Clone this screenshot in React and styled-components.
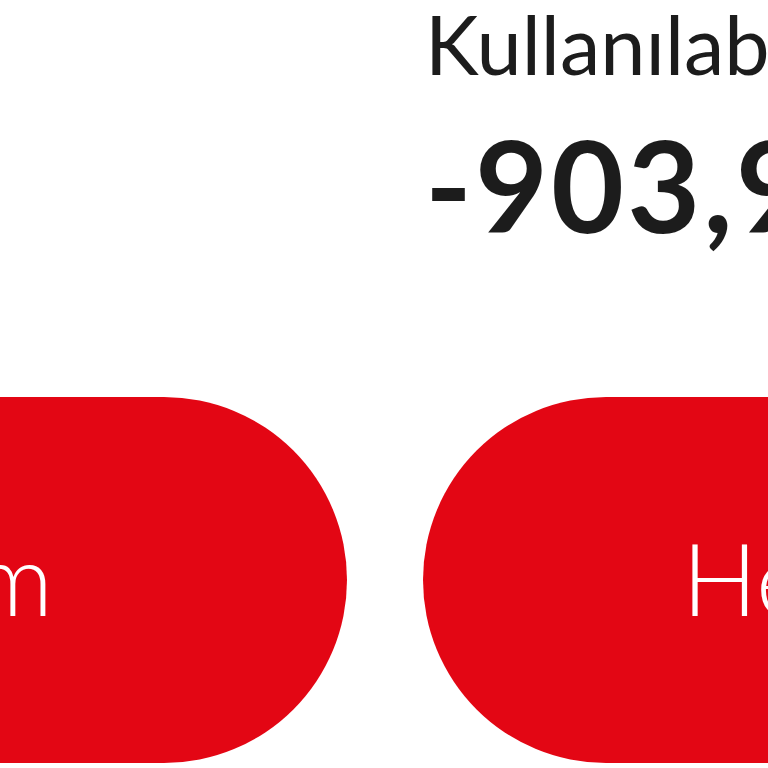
import styled, { createGlobalStyle } from 'styled-components';

const GlobalStyle = createGlobalStyle`
	html, body {
		margin: 0;
		padding: 0;
		background: #ffffff;
		overflow: hidden;
	}
	body {
		font-family: 'Lato', 'Open Sans', sans-serif;
	}
	#root {
		width: 768px;
		height: 768px;
		overflow: hidden;
	}
`;

const Page = styled.main`
	display: grid;
	grid-template-columns: 900px 900px;
	grid-template-rows: 397px 366px;
	column-gap: 76px;
	margin-left: -553px;
`;

const Balance = styled.section`
	grid-column: 2;
	grid-row: 1;
	display: flex;
	flex-direction: column;
	padding-left: 2px;
`;

const Label = styled.span`
	font-size: 81px;
	font-weight: 400;
	line-height: 1;
	color: #1c1c1c;
	white-space: nowrap;
	margin-top: 3px;
`;

const Amount = styled.span`
	font-size: 126px;
	font-weight: 700;
	line-height: 1;
	letter-spacing: 3px;
	color: #1c1c1c;
	white-space: nowrap;
	margin-top: 38px;
`;

const ActionButton = styled.button`
	grid-row: 2;
	grid-column: ${(p) => (p.$side === 'left' ? 1 : 2)};
	display: flex;
	align-items: center;
	justify-content: ${(p) => (p.$side === 'left' ? 'flex-end' : 'flex-start')};
	padding: ${(p) => (p.$side === 'left' ? '0 294px 6px 0' : '0 0 6px 259px')};
	height: 366px;
	border: none;
	border-radius: 183px;
	background: #e30614;
	color: #ffffff;
	font-family: 'Lato', 'Open Sans', sans-serif;
	font-size: 100px;
	font-weight: 300;
	white-space: nowrap;
	cursor: pointer;
`;

const App = () => {
	return (
		<>
			<GlobalStyle />
			<Page>
				<Balance>
					<Label>Kullanılabilir Bakiye</Label>
					<Amount>-903,90 TL</Amount>
				</Balance>
				<ActionButton $side='left'>Ödemelerim</ActionButton>
				<ActionButton $side='right'>Hesap Hareketleri</ActionButton>
			</Page>
		</>
	);
};

export default App;
